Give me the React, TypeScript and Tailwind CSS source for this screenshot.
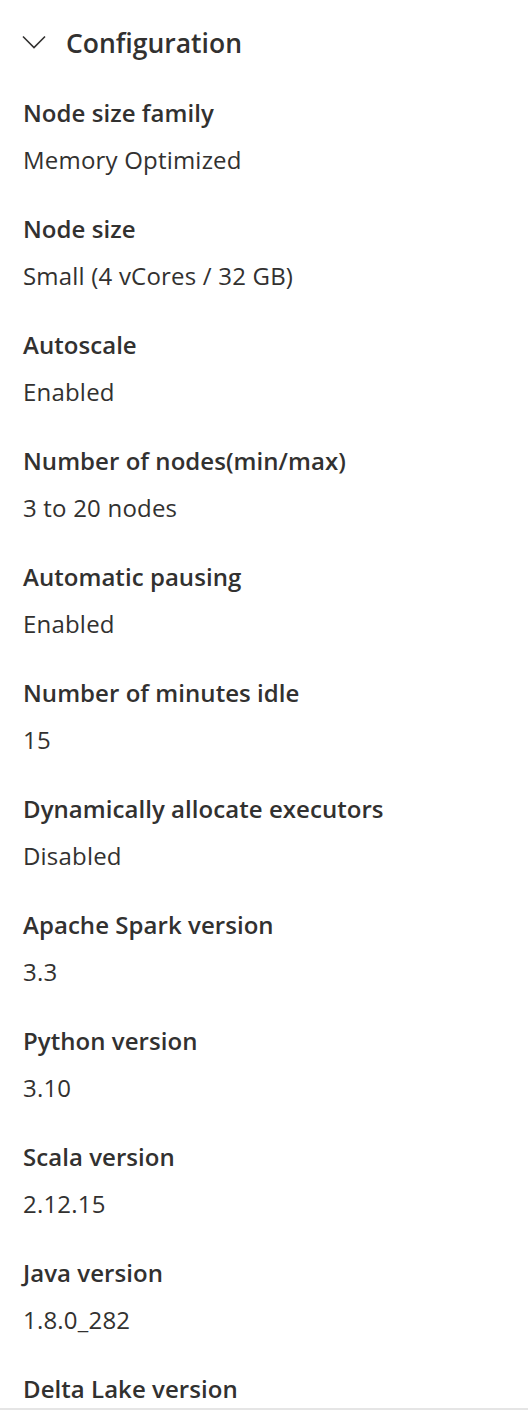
import React from "react";

const items: { label: string; value?: string }[] = [
  { label: "Node size family", value: "Memory Optimized" },
  { label: "Node size", value: "Small (4 vCores / 32 GB)" },
  { label: "Autoscale", value: "Enabled" },
  { label: "Number of nodes(min/max)", value: "3 to 20 nodes" },
  { label: "Automatic pausing", value: "Enabled" },
  { label: "Number of minutes idle", value: "15" },
  { label: "Dynamically allocate executors", value: "Disabled" },
  { label: "Apache Spark version", value: "3.3" },
  { label: "Python version", value: "3.10" },
  { label: "Scala version", value: "2.12.15" },
  { label: "Java version", value: "1.8.0_282" },
  { label: "Delta Lake version" },
];

export default function App() {
  return (
    <div
      className="w-[528px] h-[1422px] overflow-hidden bg-white text-[#323130]"
      style={{ fontFamily: '"Open Sans", "Noto Sans", sans-serif' }}
    >
      <div className="h-[1408px] overflow-hidden">
        <div className="flex items-center h-[86px] pl-[22px]">
          <svg width="24" height="14" viewBox="0 0 24 14" fill="none" className="mt-[-2px]">
            <path d="M1 1.5 L12 12.5 L23 1.5" stroke="#323130" strokeWidth="1.6" />
          </svg>
          <span className="ml-[20px] text-[26.5px] font-semibold leading-none">Configuration</span>
        </div>
        <div className="flex flex-col pl-[23px] pt-[3px]">
          {items.map((it) => (
            <div key={it.label} className="h-[116px]">
              <div className="text-[24px] font-semibold leading-[47px] tracking-[0.05px]">{it.label}</div>
              {it.value && <div className="text-[24px] leading-[47px] tracking-[0.2px]">{it.value}</div>}
            </div>
          ))}
        </div>
      </div>
      <div className="h-[2px] bg-[#e5e5e5]" />
    </div>
  );
}
